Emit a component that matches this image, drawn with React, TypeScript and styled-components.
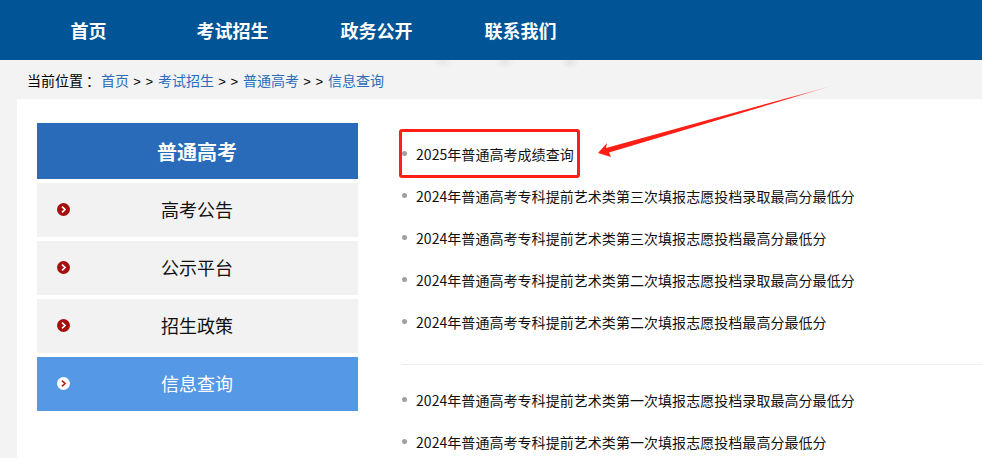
import styled, { createGlobalStyle } from 'styled-components';

const GlobalStyle = createGlobalStyle`
  html, body {
    margin: 0;
    padding: 0;
    height: 458px;
    overflow: hidden;
    background: #f3f3f3;
    font-family: "Noto Sans CJK SC", "Noto Sans", sans-serif;
    color: #111;
  }
  ul { margin: 0; padding: 0; list-style: none; }
`;

const TopBar = styled.header`
  height: 60px;
  background: #015597;
  padding-left: 16.5px;
`;

const NavList = styled.ul`
  display: flex;
`;

const NavItem = styled.li`
  width: 144px;
  line-height: 60px;
  text-align: center;
  color: #fff;
  font-size: 18px;
  font-weight: 700;
`;

const Crumbs = styled.div`
  height: 39px;
  line-height: 40px;
  padding-left: 27px;
  font-size: 14px;
  white-space: nowrap;
  background:
    radial-gradient(ellipse 10px 7px at 443px 2px, #e8e8e8, transparent),
    radial-gradient(ellipse 10px 7px at 505px 2px, #e6e6e6, transparent),
    radial-gradient(ellipse 10px 7px at 570px 2px, #e4e4e4, transparent),
    #f3f3f3;
`;

const CrumbLabel = styled.span`
  display: inline-block;
  width: 74px;
  color: #000;
`;

const CrumbColon = styled.span`
  margin-left: 3px;
`;

const CrumbLink = styled.a`
  color: #2a6cbb;
`;

const CrumbSep = styled.span`
  display: inline-block;
  width: 29px;
  text-align: center;
  color: #000;
  font-family: "Liberation Sans", sans-serif;
  font-size: 13px;
  letter-spacing: 0.5px;
`;

const Panel = styled.main`
  position: relative;
  margin-left: 17px;
  background: #fff;
  display: flex;
  gap: 44px;
  padding: 24px 0 0 20px;
  height: 400px;
`;

const Sidebar = styled.aside`
  width: 321px;
  flex-shrink: 0;
`;

const SideTitle = styled.h2`
  margin: 0 0 4px;
  height: 56px;
  line-height: 57px;
  padding-right: 1px;
  background: #2a6bb9;
  color: #fff;
  text-align: center;
  font-size: 20px;
  font-weight: 700;
`;

const SideMenu = styled.ul`
  display: flex;
  flex-direction: column;
  gap: 4px;
`;

const SideItem = styled.li<{ $active?: boolean }>`
  position: relative;
  height: 54px;
  line-height: 53px;
  padding-right: 1px;
  text-align: center;
  font-size: 18px;
  background: ${(p) => (p.$active ? '#5599e6' : '#f2f2f2')};
  color: ${(p) => (p.$active ? '#fff' : '#111')};
`;

const SideIcon = styled.svg`
  position: absolute;
  left: 20px;
  top: 20px;
  width: 13px;
  height: 13px;
`;

const Content = styled.section`
  flex: 1;
  min-width: 0;
`;

const LinkList = styled.ul<{ $withRule?: boolean }>`
  padding: 11px 0 ${(p) => (p.$withRule ? '20px' : '0')};
  border-bottom: ${(p) => (p.$withRule ? '1px solid #eee' : 'none')};
  margin-bottom: ${(p) => (p.$withRule ? '4px' : '0')};
`;

const LinkRow = styled.li`
  position: relative;
  height: 42px;
  line-height: 41px;
  padding-left: 14px;
  font-size: 14px;
  letter-spacing: 0.05px;
  white-space: nowrap;

  &::before {
    content: '';
    position: absolute;
    left: 0;
    top: 17px;
    width: 5px;
    height: 5px;
    border-radius: 50%;
    background: #a0a0a0;
  }
`;

const Highlight = styled.div`
  position: absolute;
  left: 382px;
  top: 30px;
  width: 175px;
  height: 43px;
  border: 3px solid #ff1f17;
  border-radius: 3px;
`;

const Arrow = styled.svg`
  position: absolute;
  left: 0;
  top: -99px;
  width: 965px;
  height: 458px;
`;

const navItems = ['首页', '考试招生', '政务公开', '联系我们'];
const sideItems = ['高考公告', '公示平台', '招生政策', '信息查询'];
const crumbs = ['考试招生', '普通高考', '信息查询'];
const firstLinks = [
  '2025年普通高考成绩查询',
  '2024年普通高考专科提前艺术类第三次填报志愿投档录取最高分最低分',
  '2024年普通高考专科提前艺术类第三次填报志愿投档最高分最低分',
  '2024年普通高考专科提前艺术类第二次填报志愿投档录取最高分最低分',
  '2024年普通高考专科提前艺术类第二次填报志愿投档最高分最低分',
];
const secondLinks = [
  '2024年普通高考专科提前艺术类第一次填报志愿投档录取最高分最低分',
  '2024年普通高考专科提前艺术类第一次填报志愿投档最高分最低分',
];

export default function App() {
  return (
    <>
      <GlobalStyle />
      <TopBar>
        <NavList>
          {navItems.map((item) => (
            <NavItem key={item}>{item}</NavItem>
          ))}
        </NavList>
      </TopBar>
      <Crumbs>
        <CrumbLabel>
          当前位置<CrumbColon>：</CrumbColon>
        </CrumbLabel>
        <CrumbLink>首页</CrumbLink>
        {crumbs.map((item) => (
          <span key={item}>
            <CrumbSep>{'> >'}</CrumbSep>
            <CrumbLink>{item}</CrumbLink>
          </span>
        ))}
      </Crumbs>
      <Panel>
        <Sidebar>
          <SideTitle>普通高考</SideTitle>
          <SideMenu>
            {sideItems.map((item, i) => {
              const active = i === sideItems.length - 1;
              return (
                <SideItem key={item} $active={active}>
                  <SideIcon viewBox="0 0 13 13">
                    <circle cx="6.5" cy="6.5" r="6.5" fill={active ? '#fff' : '#a50f0f'} />
                    <path
                      d="M5 3.6 8 6.5 5 9.4"
                      fill="none"
                      stroke={active ? '#c0201c' : '#fff'}
                      strokeWidth="1.7"
                    />
                  </SideIcon>
                  {item}
                </SideItem>
              );
            })}
          </SideMenu>
        </Sidebar>
        <Content>
          <LinkList $withRule>
            {firstLinks.map((text) => (
              <LinkRow key={text}>{text}</LinkRow>
            ))}
          </LinkList>
          <LinkList>
            {secondLinks.map((text) => (
              <LinkRow key={text}>{text}</LinkRow>
            ))}
          </LinkList>
        </Content>
        <Highlight />
        <Arrow viewBox="17 0 965 458">
          <defs>
            <linearGradient id="tail" x1="835" y1="85" x2="598" y2="153" gradientUnits="userSpaceOnUse">
              <stop offset="0" stopColor="#ff1f17" stopOpacity="0.1" />
              <stop offset="0.2" stopColor="#ff1f17" />
              <stop offset="1" stopColor="#ff1f17" />
            </linearGradient>
          </defs>
          <path d="M598 153 607 143 606 148 835 85 609 152.5 611 157Z" fill="url(#tail)" />
        </Arrow>
      </Panel>
    </>
  );
}
